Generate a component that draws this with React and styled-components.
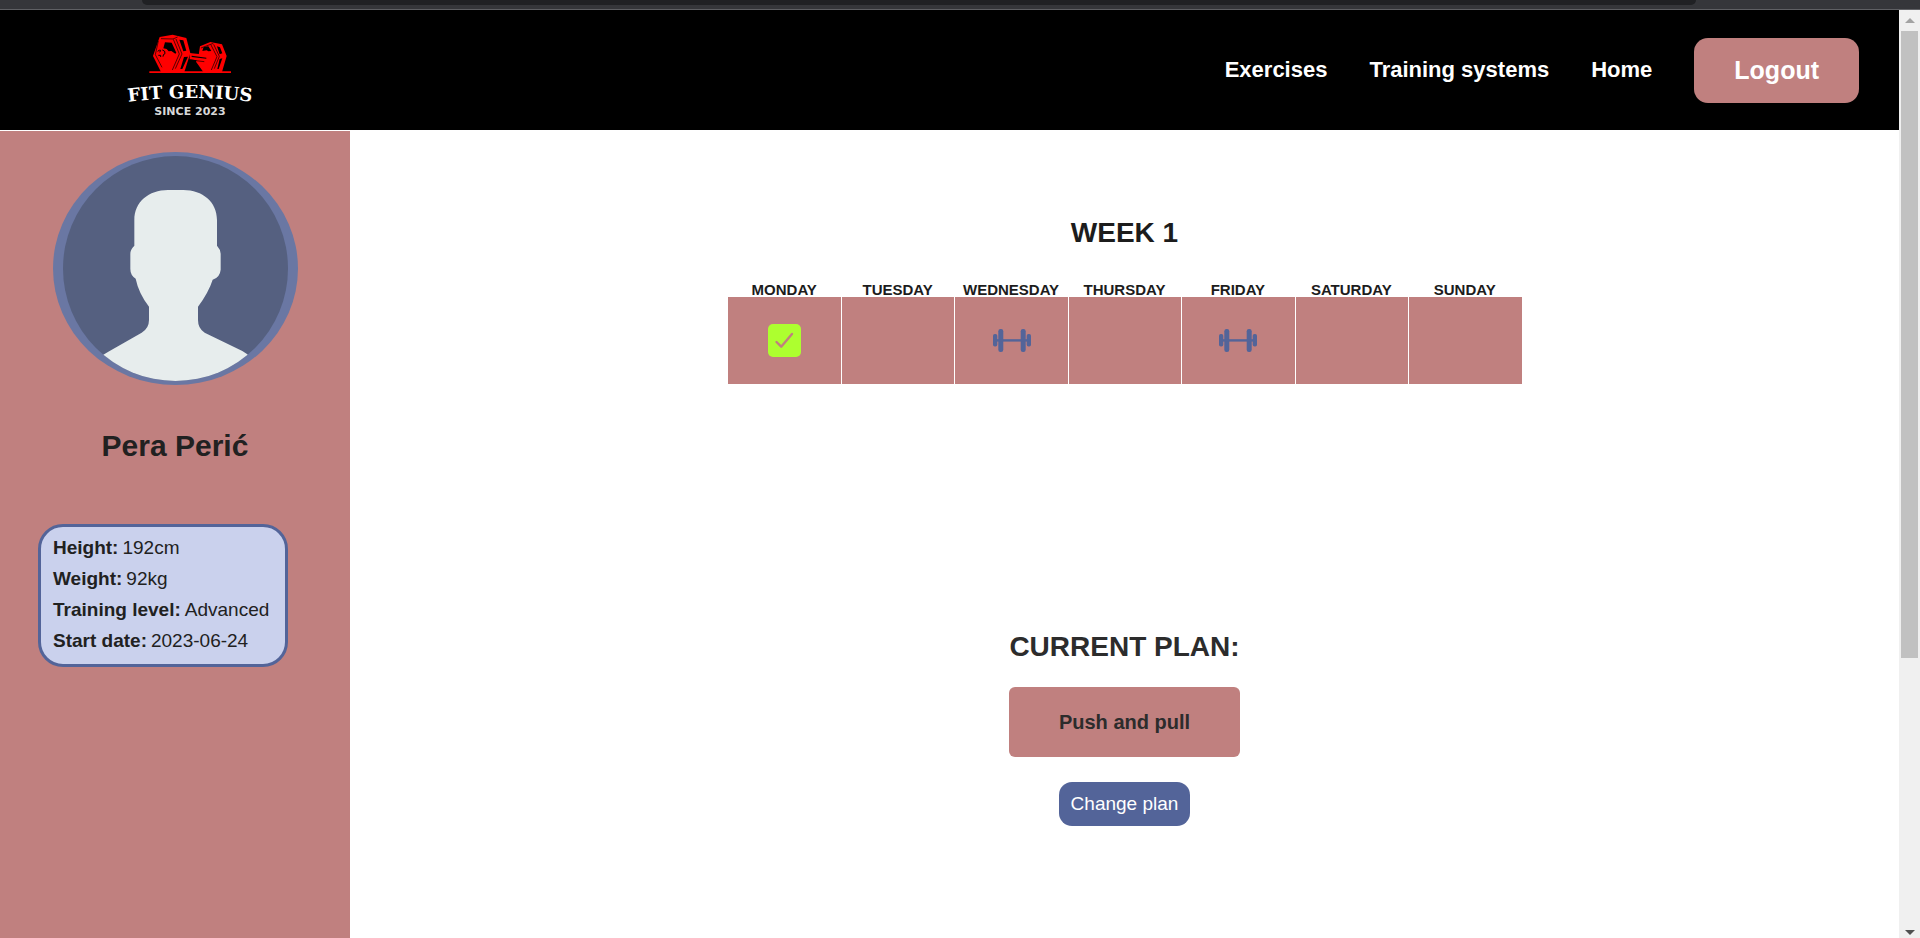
import React from "react";
import styled, { createGlobalStyle } from "styled-components";

const ROSE = "#c0807f";
const BLUE = "#536499";

const GlobalStyle = createGlobalStyle`
  *, *::before, *::after { box-sizing: border-box; }
  html, body, #root { height: 100%; }
  body {
    margin: 0;
    background: #fff;
    color: #212121;
    font-family: "Liberation Sans", Arial, sans-serif;
    overflow: hidden;
  }
`;

const Window = styled.div`
  display: flex;
  flex-direction: column;
  height: 100vh;
`;

const BrowserStrip = styled.div`
  flex: none;
  height: 10px;
  padding: 0 224px 0 142px;
  background: #35363a;
  border-bottom: 1px solid #5f6064;
`;

const AddressBar = styled.div`
  height: 5px;
  background: #202124;
  border-radius: 0 0 12px 12px;
`;

const Viewport = styled.div`
  flex: 1;
  display: grid;
  grid-template-columns: minmax(0, 1fr) 21px;
  min-height: 0;
`;

const Page = styled.div`
  display: flex;
  flex-direction: column;
  min-width: 0;
`;

const Header = styled.header`
  display: flex;
  align-items: center;
  justify-content: space-between;
  min-height: 121px;
  padding: 0 40px 0 125px;
  background: #000;
  border-bottom: 1px solid #fff;
`;

const Nav = styled.nav`
  display: flex;
  align-items: center;
  gap: 42px;
`;

const NavLink = styled.a`
  color: #fff;
  font-size: 22px;
  font-weight: 700;
  text-decoration: none;
`;

const LogoutButton = styled.button`
  padding: 18px 40px;
  border: 0;
  border-radius: 14px;
  background: ${ROSE};
  color: #fff;
  font: 700 25px/29px "Liberation Sans", Arial, sans-serif;
`;

const Content = styled.div`
  flex: 1;
  display: flex;
`;

const Sidebar = styled.aside`
  flex: none;
  display: flex;
  flex-direction: column;
  align-items: center;
  width: 350px;
  padding: 21px 38px;
  background: ${ROSE};
`;

const UserName = styled.h1`
  margin: 43px 0 61px;
  font-size: 30px;
  line-height: 35px;
`;

const InfoCard = styled.dl`
  align-self: flex-start;
  width: 250px;
  margin: 0;
  padding: 5px 12px 8px;
  border: 3px solid ${BLUE};
  border-radius: 25px;
  background: #cad1ed;
  font-size: 19px;
  line-height: 31px;
`;

const InfoRow = styled.div`
  display: flex;
  gap: 4px;
  white-space: nowrap;
`;

const InfoLabel = styled.dt`
  font-weight: 700;
`;

const InfoValue = styled.dd`
  margin: 0;
`;

const Main = styled.main`
  flex: 1;
  display: flex;
  flex-direction: column;
  align-items: center;
  gap: 247px;
  padding-top: 86px;
`;

const Section = styled.section`
  display: flex;
  flex-direction: column;
  align-items: center;
`;

const SectionTitle = styled.h2`
  margin: 0 0 ${(p) => p.$space}px;
  color: ${(p) => p.$color};
  font-size: 28px;
  line-height: 32px;
`;

const WeekTable = styled.table`
  width: 794px;
  table-layout: fixed;
  border-collapse: separate;
  border-spacing: 0;
`;

const DayName = styled.th`
  padding: 0;
  color: #1c1c1c;
  font-size: 15px;
  font-weight: 700;
  line-height: 14px;
`;

const DayCell = styled.td`
  height: 87px;
  padding: 0;
  background: ${ROSE};
  text-align: center;
  vertical-align: middle;

  & + & { border-left: 1px solid #fff; }
  svg { display: block; margin: 0 auto; }
`;

const PlanName = styled.div`
  align-self: stretch;
  padding: 23px 0;
  border-radius: 6px;
  background: ${ROSE};
  color: #2c2c2c;
  font-size: 20px;
  font-weight: 700;
  line-height: 24px;
  text-align: center;
`;

const ChangeButton = styled.button`
  margin-top: 25px;
  padding: 11px 12px;
  border: 0;
  border-radius: 13px;
  background: ${BLUE};
  color: #fff;
  font: 400 19px/22px "Liberation Sans", Arial, sans-serif;
`;

const ScrollTrack = styled.div`
  display: flex;
  flex-direction: column;
  background: #f0f0f0;
`;

const ScrollArrow = styled.div`
  flex: none;
  display: flex;
  align-items: center;
  justify-content: center;
  height: ${(p) => p.$height}px;
`;

const ScrollLane = styled.div`
  flex: 1;
  padding: 0 2px;
`;

const ScrollThumb = styled.div`
  height: 70%;
  background: #c1c1c1;
`;

function Logo() {
  return (
    <svg width="130" height="104" viewBox="0 -14 130 104" role="img" aria-label="Fit Genius">
      <g transform="scale(.3333) translate(60 -6)">
        <path fill="#f00" d="M13 124h245v5H13z" />
        <path fill="#f00" d="M44 21L83 14l41 10 12 46-18 56H48L24 78z" />
        <path fill="#f00" d="M134 69l54 6v20l-54-7z" />
        <path fill="#f00" d="M165 49l31-13 35 7 14 35-14 48h-56l-22-31 8-20z" />
        <path fill="#000" d="M60 37l20 1 14 30-3 3-12-8-8 1-6-7-10-2zM103 29l12 2 9 31-9 2zM176 51l14-2 9 14-9 1-5-3-13 2zM216 49l9 3 7 18-8 3z" />
        <path fill="#000" d="M117 81l12-1-17 37h-6zM140 77l44 6v3l-44-5zM224 87l8-2-11 32h-4z" />
        <path
          fill="none"
          stroke="#000"
          strokeWidth="2"
          d="M48 26l36 1 14-6M40 33L31 74l20 38M85 28l18 44-21 48M93 27l18 45-20 44M168 54l29-11 8-3M197 43l19 37-17 40M206 43l17 36-15 37M136 90l42 5"
        />
        <circle cx="49" cy="71" r="12" fill="#f00" />
        <path fill="none" stroke="#000" strokeWidth="3" d="M38 64q5-5 9-3l-3 6M52 60q10 2 8 11-6 1-6 9M40 76h7v5" />
      </g>
      <path id="logo-arc" d="M2 70Q65 62 128 70" fill="none" />
      <text fill="#fff" fontFamily="DejaVu Serif, serif" fontWeight="700" fontSize="18">
        <textPath href="#logo-arc" startOffset="50%" textAnchor="middle">FIT GENIUS</textPath>
      </text>
      <text x="65" y="83" textAnchor="middle" fill="#d8d8d8" fontFamily="DejaVu Sans, sans-serif" fontWeight="700" fontSize="11">
        SINCE 2023
      </text>
    </svg>
  );
}

function Avatar() {
  return (
    <svg width="245" height="233" viewBox="0 0 735 699" role="img" aria-label="Profile picture">
      <clipPath id="avatar-disc">
        <circle cx="367.5" cy="349.5" r="337.5" />
      </clipPath>
      <ellipse cx="367.5" cy="349.5" rx="367.5" ry="349.5" fill="#6a77a3" />
      <circle cx="367.5" cy="349.5" r="337.5" fill="#556080" />
      <path
        clipPath="url(#avatar-disc)"
        fill="#e7eded"
        d="M244 204C244 150 287 114 345 114H391C449 114 492 150 492 204V281Q503 293 503 305V353Q501 376 479 383Q467 421 435 464V504Q435 530 455 542L568 597Q583 605 596 619V699H140V618Q150 607 166 599L266 542Q288 529 288 504V464Q257 424 248 380Q232 370 232 351V305Q232 293 244 281Z"
      />
    </svg>
  );
}

function DoneIcon() {
  return (
    <svg width="33" height="33" viewBox="0 0 33 33" role="img" aria-label="Completed">
      <rect width="33" height="33" rx="5" fill="#adff2f" />
      <path d="M8.5 18l4.7 4.7L24 10" fill="none" stroke={ROSE} strokeWidth="2.4" strokeLinecap="round" strokeLinejoin="round" />
    </svg>
  );
}

function DumbbellIcon() {
  return (
    <svg width="38" height="23" viewBox="0 0 38 23" fill={BLUE} role="img" aria-label="Training day">
      <rect x="0" y="5" width="4.3" height="12.6" rx="1.8" />
      <rect x="5.3" y="0" width="5" height="23" rx="2.2" />
      <rect x="27.7" y="0" width="5" height="23" rx="2.2" />
      <rect x="33.7" y="5" width="4.3" height="12.6" rx="1.8" />
      <rect x="2" y="10.2" width="34" height="2.4" />
    </svg>
  );
}

const days = [
  ["Monday", "done"],
  ["Tuesday"],
  ["Wednesday", "training"],
  ["Thursday"],
  ["Friday", "training"],
  ["Saturday"],
  ["Sunday"],
];

const facts = [
  ["Height:", "192cm"],
  ["Weight:", "92kg"],
  ["Training level:", "Advanced"],
  ["Start date:", "2023-06-24"],
];

export default function App() {
  return (
    <Window>
      <GlobalStyle />
      <BrowserStrip>
        <AddressBar />
      </BrowserStrip>
      <Viewport>
        <Page>
          <Header>
            <Logo />
            <Nav>
              <NavLink href="#exercises">Exercises</NavLink>
              <NavLink href="#systems">Training systems</NavLink>
              <NavLink href="#home">Home</NavLink>
              <LogoutButton type="button">Logout</LogoutButton>
            </Nav>
          </Header>
          <Content>
            <Sidebar>
              <Avatar />
              <UserName>Pera Perić</UserName>
              <InfoCard>
                {facts.map(([label, value]) => (
                  <InfoRow key={label}>
                    <InfoLabel>{label}</InfoLabel>
                    <InfoValue>{value}</InfoValue>
                  </InfoRow>
                ))}
              </InfoCard>
            </Sidebar>
            <Main>
              <Section>
                <SectionTitle $space={34} $color="#1c1c1c">WEEK 1</SectionTitle>
                <WeekTable>
                  <thead>
                    <tr>
                      {days.map(([name]) => (
                        <DayName key={name} scope="col">{name.toUpperCase()}</DayName>
                      ))}
                    </tr>
                  </thead>
                  <tbody>
                    <tr>
                      {days.map(([name, state]) => (
                        <DayCell key={name}>
                          {state === "done" && <DoneIcon />}
                          {state === "training" && <DumbbellIcon />}
                        </DayCell>
                      ))}
                    </tr>
                  </tbody>
                </WeekTable>
              </Section>
              <Section>
                <SectionTitle $space={24} $color="#2c2c2c">CURRENT PLAN:</SectionTitle>
                <PlanName>Push and pull</PlanName>
                <ChangeButton type="button">Change plan</ChangeButton>
              </Section>
            </Main>
          </Content>
        </Page>
        <ScrollTrack aria-hidden="true">
          <ScrollArrow $height={21}>
            <svg width="10" height="5" viewBox="0 0 10 5"><path d="M0 5L5 0l5 5z" fill="#a3a3a3" /></svg>
          </ScrollArrow>
          <ScrollLane>
            <ScrollThumb />
          </ScrollLane>
          <ScrollArrow $height={12}>
            <svg width="10" height="5" viewBox="0 0 10 5"><path d="M0 0l5 5 5-5z" fill="#505050" /></svg>
          </ScrollArrow>
        </ScrollTrack>
      </Viewport>
    </Window>
  );
}
